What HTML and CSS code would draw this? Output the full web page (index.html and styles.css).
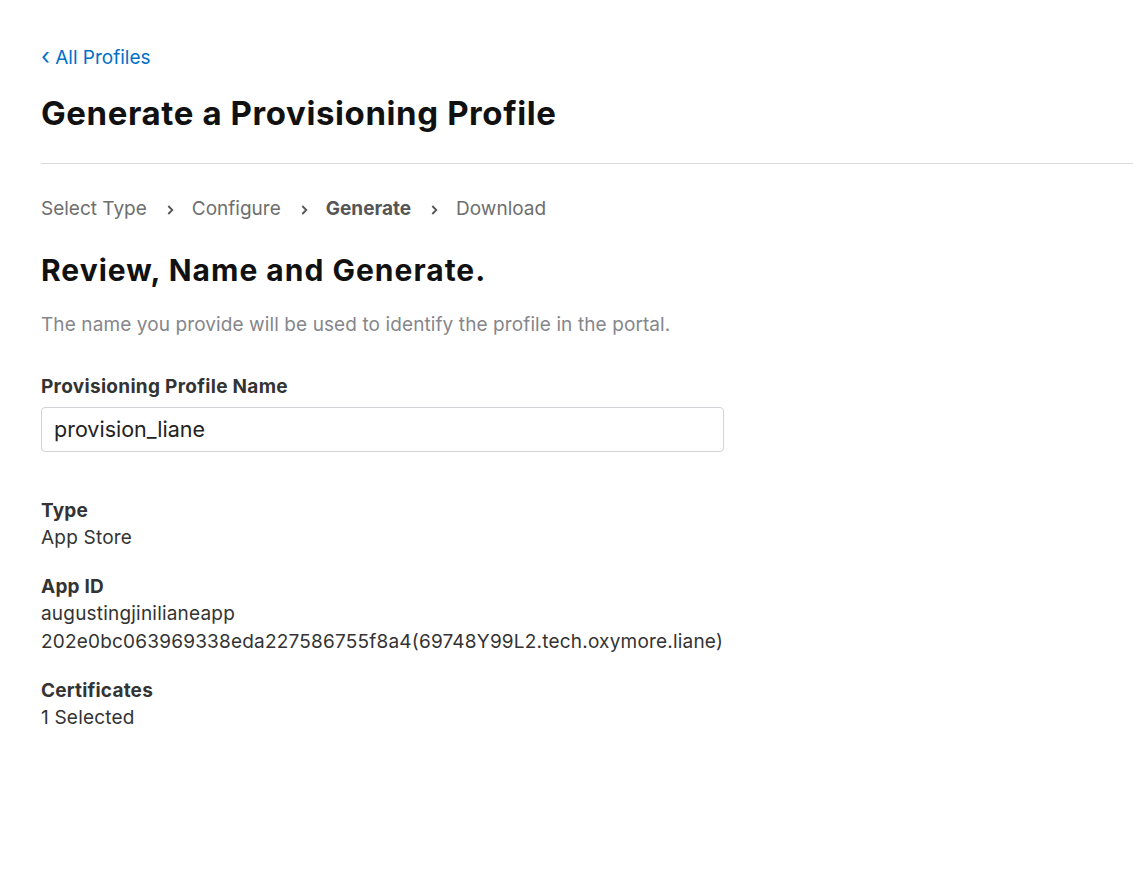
FILE: index.html
```html
<!DOCTYPE html>
<html>
<head>
<meta charset="utf-8">
<link rel="stylesheet" href="styles.css">
</head>
<body>
<div class="page">
  <a class="back" href="#"><span class="back-chev">‹</span> All Profiles</a>
  <h1 class="title">Generate a Provisioning Profile</h1>
  <div class="rule"></div>
  <nav class="steps">
    <span class="step">Select Type</span>
    <svg class="chev" width="7" height="10" viewBox="0 0 7 10"><path d="M1.3 1 L5.3 5 L1.3 9" fill="none" stroke="#555" stroke-width="1.8"/></svg>
    <span class="step">Configure</span>
    <svg class="chev" width="7" height="10" viewBox="0 0 7 10"><path d="M1.3 1 L5.3 5 L1.3 9" fill="none" stroke="#555" stroke-width="1.8"/></svg>
    <span class="step current">Generate</span>
    <svg class="chev" width="7" height="10" viewBox="0 0 7 10"><path d="M1.3 1 L5.3 5 L1.3 9" fill="none" stroke="#555" stroke-width="1.8"/></svg>
    <span class="step">Download</span>
  </nav>
  <h2 class="subtitle">Review, Name and Generate.</h2>
  <p class="desc">The name you provide will be used to identify the profile in the portal.</p>
  <label class="field-label">Provisioning Profile Name</label>
  <div class="input">provision_liane</div>
  <dl class="details">
    <div class="item">
      <dt>Type</dt>
      <dd>App Store</dd>
    </div>
    <div class="item">
      <dt>App ID</dt>
      <dd>augustingjinilianeapp<br>202e0bc063969338eda227586755f8a4(69748Y99L2.tech.oxymore.liane)</dd>
    </div>
    <div class="item">
      <dt>Certificates</dt>
      <dd>1 Selected</dd>
    </div>
  </dl>
</div>
</body>
</html>
```
FILE: styles.css
```css
html, body {
  margin: 0;
  padding: 0;
  background: #fff;
}
body {
  font-family: Inter, "Noto Sans", sans-serif;
  color: #333;
}
.page {
  padding: 44px 0 0 41px;
}
.back {
  display: inline-block;
  color: #0070c9;
  text-decoration: none;
  font-size: 19px;
  line-height: 24px;
}
.back-chev {
  font-size: 23px;
}
.title {
  margin: 23px 0 0;
  font-size: 33px;
  line-height: 40px;
  font-weight: 700;
  color: #111;
  letter-spacing: 0.6px;
}
.rule {
  margin-top: 30px;
  height: 1px;
  background: #d9d9d9;
}
.steps {
  display: flex;
  align-items: center;
  margin-top: 33px;
  font-size: 19px;
  line-height: 24px;
  color: #6e6e6e;
}
.step.current {
  font-weight: 700;
  color: #555;
}
.chev {
  margin: 1px 18px 0 20px;
}
.subtitle {
  margin: 31px 0 0;
  font-size: 30px;
  line-height: 36px;
  font-weight: 700;
  color: #111;
  letter-spacing: 1px;
}
.desc {
  margin: 25px 0 0;
  font-size: 19px;
  line-height: 24px;
  color: #86868b;
  letter-spacing: 0.1px;
}
.field-label {
  display: block;
  margin-top: 38px;
  font-size: 19px;
  line-height: 24px;
  font-weight: 700;
  color: #333;
  letter-spacing: 0.3px;
}
.input {
  box-sizing: border-box;
  margin-top: 8px;
  width: 683px;
  height: 45px;
  border: 1px solid #d2d2d7;
  border-radius: 4px;
  padding: 0 12px;
  font-size: 21.5px;
  line-height: 43px;
  color: #222;
}
.details {
  margin: 46px 0 0;
}
.item {
  margin-bottom: 22px;
}
.details dt {
  font-size: 19px;
  line-height: 26px;
  font-weight: 700;
  color: #333;
  letter-spacing: 0.2px;
}
.details dd {
  margin: 0;
  font-size: 19px;
  line-height: 28px;
  color: #333;
  letter-spacing: 0.2px;
}
```
